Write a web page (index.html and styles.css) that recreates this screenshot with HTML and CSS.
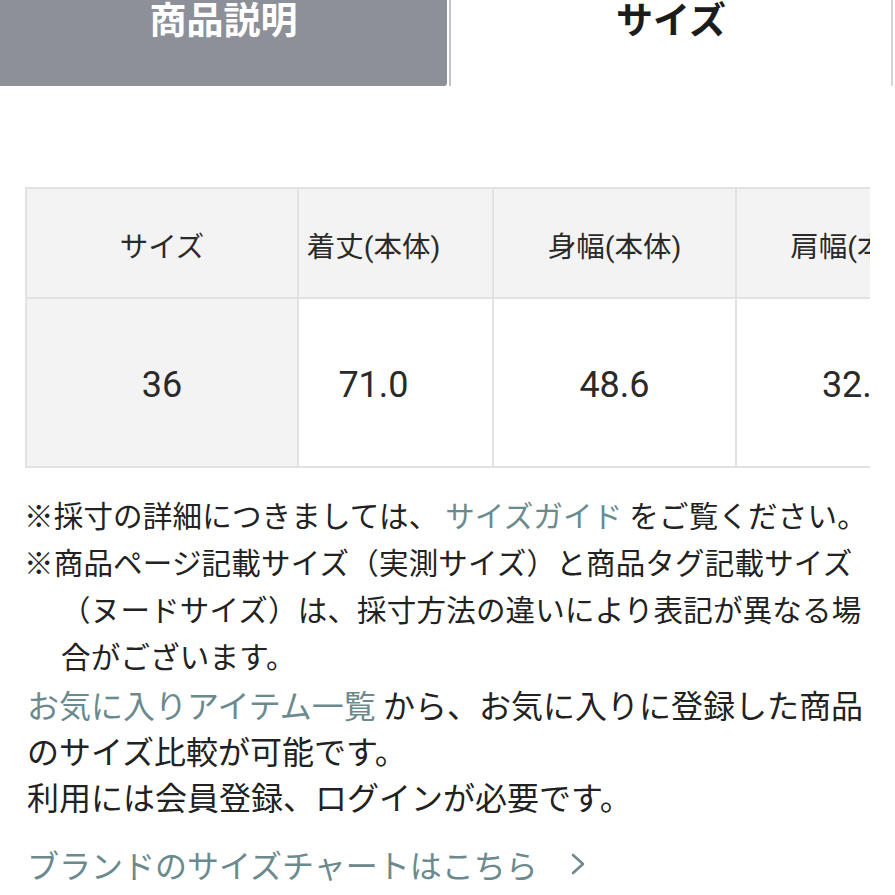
FILE: index.html
```html
<!DOCTYPE html>
<html lang="ja">
<head>
<meta charset="utf-8">
<link rel="stylesheet" href="styles.css">
</head>
<body>
<div class="tabs">
  <div class="tab tab-off">商品説明</div>
  <div class="tab tab-on">サイズ</div>
</div>

<div class="table-wrap">
  <table class="size-table">
    <colgroup>
      <col class="c1"><col class="c2"><col class="c3"><col class="c4">
    </colgroup>
    <tr class="head">
      <th class="first">サイズ</th>
      <th class="narrow">着丈(本体)</th>
      <th>身幅(本体)</th>
      <th>肩幅(本体)</th>
    </tr>
    <tr class="body">
      <td class="first">36</td>
      <td class="narrow">71.0</td>
      <td>48.6</td>
      <td>32.0</td>
    </tr>
  </table>
</div>

<div class="notes">
  <div class="note">※採寸の詳細につきましては、 <span class="link">サイズガイド</span> をご覧ください。</div>
  <div class="note">※商品ページ記載サイズ（実測サイズ）と商品タグ記載サイズ<br>（ヌードサイズ）は、採寸方法の違いにより表記が異なる場<br>合がございます。</div>
</div>

<div class="info">
  <p><span class="link">お気に入りアイテム一覧</span> から、お気に入りに登録した商品<br>のサイズ比較が可能です。<br>利用には会員登録、ログインが必要です。</p>
</div>

<div class="brand">
  <span class="link">ブランドのサイズチャートはこちら</span>
  <svg class="chev" width="16" height="24" viewBox="0 0 16 24"><path d="M3 3 L13 12 L3 21" fill="none" stroke="#6f8a8f" stroke-width="2.6" stroke-linecap="round" stroke-linejoin="round"/></svg>
</div>
</body>
</html>
```

FILE: styles.css
```css
html, body {
  margin: 0;
  padding: 0;
  background: #ffffff;
}
body {
  font-family: Roboto, "Noto Sans CJK JP", sans-serif;
  color: #222222;
  width: 895px;
  overflow: hidden;
}

.tabs {
  display: flex;
  height: 86px;
}
.tab {
  font-family: "Noto Sans CJK JP", sans-serif;
  font-weight: 700;
  font-size: 37px;
  line-height: 36px;
  text-align: center;
  box-sizing: border-box;
}
.tab-off {
  width: 447px;
  background: #8e9099;
  color: #ffffff;
  border-bottom-right-radius: 3px;
}
.tab-on {
  margin-left: 2px;
  width: 444px;
  color: #1c1c1c;
  border-left: 2px solid #c2c3c9;
  border-right: 2px solid #d4d4d6;
}

.table-wrap {
  margin: 101px 0 0 25px;
  width: 845px;
  overflow: hidden;
}
.size-table {
  border-collapse: collapse;
  table-layout: fixed;
  width: 952px;
  color: #2a2a2a;
}
.c1 { width: 272px; }
.c2 { width: 195px; }
.c3 { width: 243px; }
.c4 { width: 242px; }
.size-table th,
.size-table td {
  border: 2px solid #e1e2e4;
  text-align: center;
  padding: 0;
}
.head th {
  height: 106px;
  background: #f3f3f3;
  font-weight: 400;
  font-size: 28.5px;
  padding-top: 2px;
}
.body td {
  height: 163px;
  font-size: 36px;
  padding-top: 4px;
}
.body td.first {
  background: #f3f3f3;
}
.size-table .narrow {
  padding-right: 44px;
}

.notes {
  margin-top: 23px;
  font-family: "Noto Sans CJK JP", sans-serif;
  font-size: 29.5px;
  line-height: 47px;
  white-space: nowrap;
}
.note {
  padding-left: 61px;
  text-indent: -37px;
  letter-spacing: 0.2px;
}

.info p {
  margin: 2px 0 0;
  padding-left: 27px;
  font-family: "Noto Sans CJK JP", sans-serif;
  font-size: 32px;
  line-height: 46px;
  white-space: nowrap;
}

.link {
  color: #6b8a8e;
}

.brand {
  margin-top: 22px;
  padding-left: 27px;
  display: flex;
  align-items: center;
  gap: 32px;
  font-family: "Noto Sans CJK JP", sans-serif;
  font-size: 32px;
  line-height: 46px;
}
.chev {
  display: block;
}
```
